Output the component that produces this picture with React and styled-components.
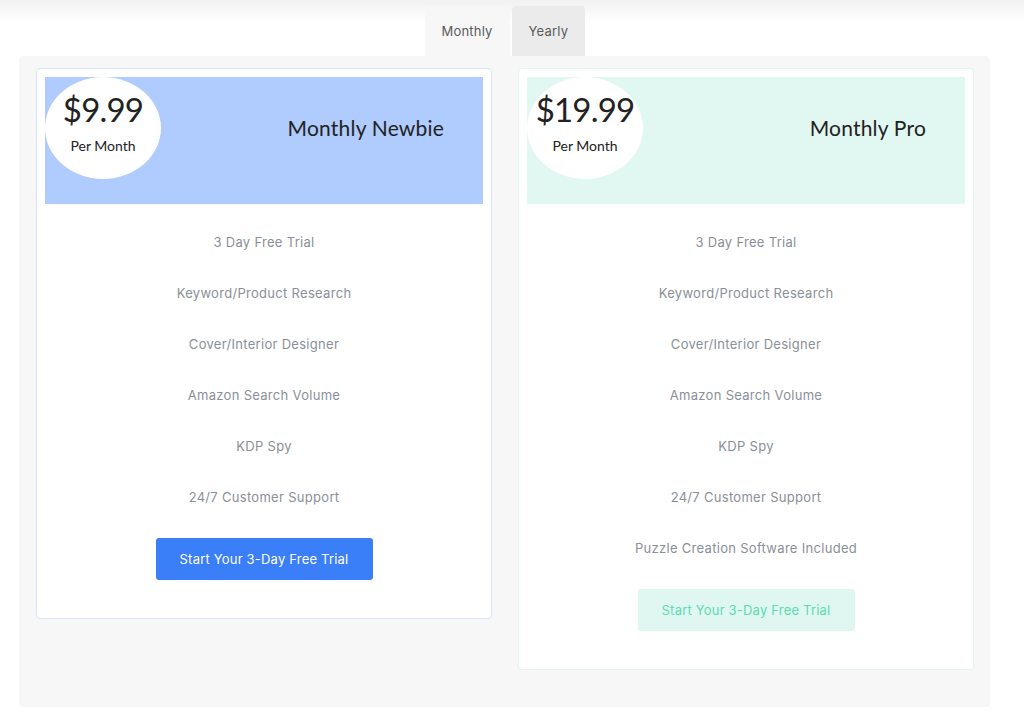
import React, { useState } from 'react';
import styled, { createGlobalStyle } from 'styled-components';

const plans = [
  {
    id: 'newbie',
    price: '$9.99',
    title: 'Monthly Newbie',
    tone: 'blue',
    features: [
      '3 Day Free Trial',
      'Keyword/Product Research',
      'Cover/Interior Designer',
      'Amazon Search Volume',
      'KDP Spy',
      '24/7 Customer Support',
    ],
  },
  {
    id: 'pro',
    price: '$19.99',
    title: 'Monthly Pro',
    tone: 'green',
    features: [
      '3 Day Free Trial',
      'Keyword/Product Research',
      'Cover/Interior Designer',
      'Amazon Search Volume',
      'KDP Spy',
      '24/7 Customer Support',
      'Puzzle Creation Software Included',
    ],
  },
];

const tones = {
  blue: { band: '#b0cbfd', border: '#d6e4fd', button: '#3a7ef8', buttonText: '#ffffff' },
  green: { band: '#e1f7f1', border: '#e3f5ef', button: '#e0f7f1', buttonText: '#5ddab2' },
};

const App = () => {
  const [period, setPeriod] = useState('monthly');

  return (
    <>
      <GlobalStyle />
      <Page>
        <Tabs>
          <Tab active={period === 'monthly'} onClick={() => setPeriod('monthly')}>Monthly</Tab>
          <Tab active={period === 'yearly'} onClick={() => setPeriod('yearly')}>Yearly</Tab>
        </Tabs>
        <Panel>
          {plans.map((plan) => (
            <Card key={plan.id} tone={plan.tone}>
              <Band tone={plan.tone}>
                <PriceBubble>
                  <Price>{plan.price}</Price>
                  <PerMonth>Per Month</PerMonth>
                </PriceBubble>
                <PlanTitle>{plan.title}</PlanTitle>
              </Band>
              <Features>
                {plan.features.map((f) => (
                  <Feature key={f}>{f}</Feature>
                ))}
              </Features>
              <TrialButton tone={plan.tone}>Start Your 3-Day Free Trial</TrialButton>
            </Card>
          ))}
        </Panel>
      </Page>
    </>
  );
};

export default App;

const GlobalStyle = createGlobalStyle`
  body {
    margin: 0;
    background: linear-gradient(#f1f1f1 0px, #ffffff 22px);
    font-family: Inter, "Open Sans", sans-serif;
  }
`;

const Page = styled.div`
  width: 1024px;
  height: 724px;
  padding: 6px 34px 0 19px;
  box-sizing: border-box;
  display: flex;
  flex-direction: column;
  align-items: stretch;
`;

const Tabs = styled.div`
  display: flex;
  justify-content: center;
  gap: 2px;
`;

const Tab = styled.button`
  height: 50px;
  padding: 0 17px;
  border: none;
  border-radius: 4px 4px 0 0;
  background: ${(p) => (p.active ? '#f7f7f7' : '#ebebeb')};
  color: #5a5a5a;
  font-family: Inter, "Open Sans", sans-serif;
  font-size: 13px;
  letter-spacing: 0.2px;
  cursor: pointer;
  &:first-child {
    width: 85px;
  }
  &:last-child {
    width: 73px;
  }
`;

const Panel = styled.div`
  width: 971px;
  height: 651px;
  box-sizing: border-box;
  background: #f7f7f7;
  border-radius: 4px;
  padding: 12px 16px 0 17px;
  display: flex;
  align-items: flex-start;
  gap: 26px;
`;

const Card = styled.div`
  width: 456px;
  box-sizing: border-box;
  background: #ffffff;
  border: 1px solid ${(p) => tones[p.tone].border};
  border-radius: 4px;
  padding: 8px 8px 38px;
  display: flex;
  flex-direction: column;
  align-items: center;
`;

const Band = styled.div`
  width: 100%;
  height: 127px;
  background: ${(p) => tones[p.tone].band};
  display: flex;
  align-items: flex-start;
  justify-content: space-between;
  padding-right: 39px;
  box-sizing: border-box;
`;

const PriceBubble = styled.div`
  width: 116px;
  height: 102px;
  border-radius: 50%;
  background: #ffffff;
  display: flex;
  flex-direction: column;
  align-items: center;
  padding-top: 14px;
  box-sizing: border-box;
  font-family: Lato, "Noto Sans", sans-serif;
  color: #222;
`;

const Price = styled.div`
  font-size: 33px;
  font-weight: 400;
  line-height: 36px;
  letter-spacing: -0.8px;
`;

const PerMonth = styled.div`
  font-size: 14px;
  line-height: 17px;
  margin-top: 10px;
`;

const PlanTitle = styled.div`
  font-family: Lato, "Noto Sans", sans-serif;
  font-size: 21px;
  letter-spacing: 0.2px;
  color: #222;
  margin-top: 38px;
`;

const Features = styled.ul`
  list-style: none;
  margin: 0;
  padding: 29px 0 0;
  width: 100%;
`;

const Feature = styled.li`
  height: 51px;
  line-height: 18px;
  text-align: center;
  font-size: 13px;
  color: #8a8f98;
  letter-spacing: 0.3px;
`;

const TrialButton = styled.button`
  margin-top: -1px;
  width: 217px;
  height: 42px;
  border: none;
  border-radius: 3px;
  background: ${(p) => tones[p.tone].button};
  color: ${(p) => tones[p.tone].buttonText};
  font-family: Inter, "Open Sans", sans-serif;
  font-size: 13px;
  letter-spacing: 0.2px;
  cursor: pointer;
`;
